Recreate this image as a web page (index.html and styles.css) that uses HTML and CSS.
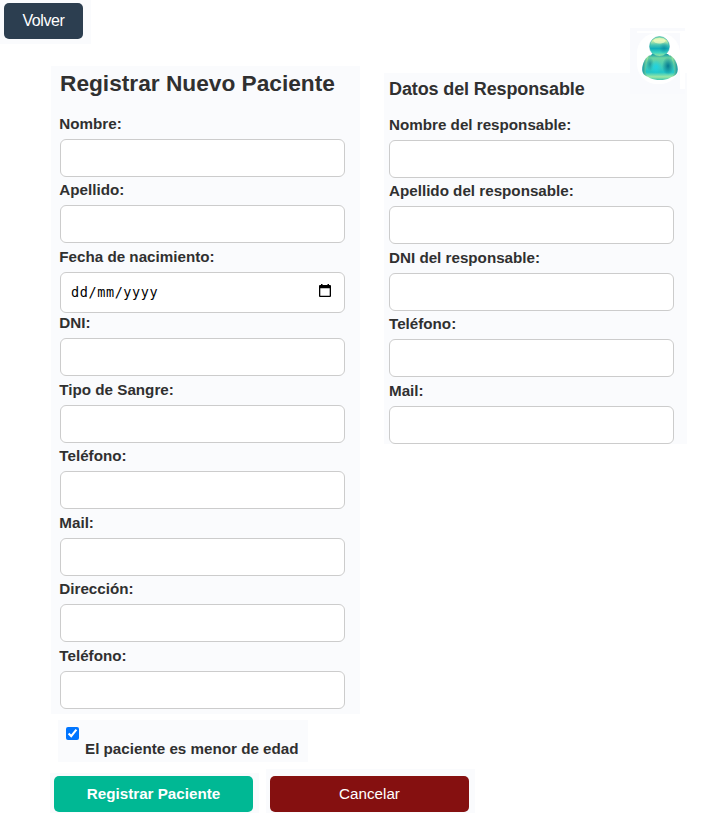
FILE: index.html
```html
<!DOCTYPE html>
<html lang="es">
<head>
<meta charset="utf-8">
<title>Registrar Nuevo Paciente</title>
<link rel="stylesheet" href="styles.css">
</head>
<body>
<header class="topbar"><button class="btn back" type="button">Volver</button></header>
<form class="page">
  <div class="columns">
    <section class="panel patient">
      <h1>Registrar Nuevo Paciente</h1>
      <label class="field"><span>Nombre:</span><input type="text"></label>
      <label class="field"><span>Apellido:</span><input type="text"></label>
      <div class="field"><span>Fecha de nacimiento:</span>
        <div class="date"><span class="date-text">dd/mm/yyyy</span>
          <svg class="calendar" viewBox="0 0 12 13"><path fill="#000" fill-rule="evenodd" d="M2 0h1.500v1h5V0H10v1h1a1 1 0 0 1 1 1v10a1 1 0 0 1-1 1H1a1 1 0 0 1-1-1V2a1 1 0 0 1 1-1h1zM1.300 4.200v7.500h9.400V4.200z"/></svg>
        </div>
      </div>
      <label class="field"><span>DNI:</span><input type="text"></label>
      <label class="field"><span>Tipo de Sangre:</span><input type="text"></label>
      <label class="field"><span>Teléfono:</span><input type="text"></label>
      <label class="field"><span>Mail:</span><input type="text"></label>
      <label class="field"><span>Dirección:</span><input type="text"></label>
      <label class="field"><span>Teléfono:</span><input type="text"></label>
    </section>
    <section class="panel guardian">
      <h2>Datos del Responsable</h2>
      <label class="field"><span>Nombre del responsable:</span><input type="text"></label>
      <label class="field"><span>Apellido del responsable:</span><input type="text"></label>
      <label class="field"><span>DNI del responsable:</span><input type="text"></label>
      <label class="field"><span>Teléfono:</span><input type="text"></label>
      <label class="field"><span>Mail:</span><input type="text"></label>
      <div class="avatar">
        <svg viewBox="0 0 55 66">
          <defs>
            <linearGradient id="head" x2="0" y2="1"><stop offset="0" stop-color="#7fdcae"/><stop offset=".2" stop-color="#d8f3a5"/><stop offset=".42" stop-color="#4cc6b4"/><stop offset=".6" stop-color="#10adba"/><stop offset=".8" stop-color="#3bd2bf"/><stop offset="1" stop-color="#a8e89c"/></linearGradient>
            <linearGradient id="body" x2="0" y2="1"><stop offset="0" stop-color="#1199a6"/><stop offset=".15" stop-color="#6ed5a2"/><stop offset=".38" stop-color="#50cfb0"/><stop offset=".7" stop-color="#1fc5c8"/><stop offset=".88" stop-color="#9de8a4"/><stop offset="1" stop-color="#3cc6ae"/></linearGradient>
            <linearGradient id="arm"><stop offset="0" stop-color="#0f95a1"/><stop offset=".15" stop-color="#8fdf9c"/><stop offset=".3" stop-color="#0e8b9b"/><stop offset=".7" stop-color="#087f94"/><stop offset=".85" stop-color="#8fdf9c"/><stop offset="1" stop-color="#0f95a1"/></linearGradient>
            <radialGradient id="shade"><stop offset="0" stop-color="#06798f"/><stop offset="1" stop-color="#06798f" stop-opacity="0"/></radialGradient>
            <radialGradient id="glow"><stop offset="0" stop-color="#20d3e2"/><stop offset="1" stop-color="#20d3e2" stop-opacity="0"/></radialGradient>
          </defs>
          <path fill="#fff" d="M7 3h48v2H7zM50 5h5v56h-5z"/>
          <rect x="7" y="5" width="43" height="51" rx="20" fill="#fff"/>
          <path d="M19 27.500C14 31 12.200 37 12.200 41.500c0 4.500 3 7 7 7.500h21.500c4-.5 7-3 7-7.500 0-4.500-2-10.500-7-14z" fill="url(#arm)"/>
          <path d="M22 26h16c5 5 6.500 11 6.500 18-1 5.500-7 8-14.500 8S16.500 50 15.500 44c0-7 1.500-13 6.500-18z" fill="url(#body)"/>
          <ellipse cx="38" cy="38" rx="6" ry="9" fill="url(#shade)"/>
          <ellipse cx="20" cy="36" rx="4" ry="7" fill="url(#shade)" opacity=".6"/>
          <ellipse cx="26" cy="39" rx="6" ry="7" fill="url(#glow)"/>
          <circle cx="29.500" cy="18.500" r="9.900" fill="url(#head)" stroke="#26aaa9" stroke-width=".6"/>
          <ellipse cx="34" cy="20" rx="5" ry="6" fill="url(#shade)" opacity=".5"/>
          <ellipse cx="29.500" cy="12.800" rx="6" ry="2.800" fill="#f3fbc8" opacity=".7"/>
        </svg>
      </div>
    </section>
  </div>
  <label class="minor"><input type="checkbox" checked><span>El paciente es menor de edad</span></label>
  <div class="actions">
    <div class="action save-wrap"><button class="btn save" type="button">Registrar Paciente</button></div>
    <div class="action cancel-wrap"><button class="btn cancel" type="button">Cancelar</button></div>
  </div>
</form>
</body>
</html>
```
FILE: styles.css
```css
* { box-sizing: border-box; }
body { margin: 0; height: 813px; overflow: hidden; background: #fff; color: #303030; font: 15.2px/18px "Liberation Sans", Arial, sans-serif; }
.topbar { width: 91px; height: 44px; padding: 3px 4px; background: #fafbfd; }
.btn { display: block; border: 0; border-radius: 5px; padding: 0; color: #fff; font: inherit; height: 36px; }
.back { width: 79px; background: #2c3e50; font-size: 16px; letter-spacing: -.4px; }
.page { padding: 22px 0 0 51px; }
.columns { display: flex; align-items: flex-start; gap: 24px; }
.panel { position: relative; background: #fafbfd; }
.patient { width: 309px; height: 648px; padding: 2px 15px 0 9px; }
.guardian { width: 303px; height: 371px; margin-top: 7px; padding: 2px 13px 0 5px; }
h1, h2 { margin: 0; white-space: nowrap; }
h1 { height: 46.900px; font-size: 22.7px; line-height: 30px; }
h2 { height: 40.900px; font-size: 18px; line-height: 28px; letter-spacing: -.12px; }
.field { display: block; height: 66.5px; font-weight: bold; white-space: nowrap; }
.field > span { display: block; height: 24px; }
.patient .field > span { margin-left: -.7px; }
.field input, .date { display: block; width: 285px; height: 38px; border: 1px solid #ccc; border-radius: 6px; background: #fff; }
.date { display: flex; align-items: center; justify-content: space-between; height: 41px; padding: 0 13px 0 10px; color: #000; }
.date-text { font: 13.5px/18px "DejaVu Sans Mono", monospace; letter-spacing: .6px; }
.calendar { width: 12px; height: 13px; margin-top: -3px; }
.avatar { position: absolute; left: 246px; top: -45px; width: 55px; height: 66px; background: #f9fafd; }
.avatar svg { display: block; width: 55px; height: 66px; }
.minor { display: flex; width: 250px; height: 42px; margin: 6px 0 0 7px; padding: 7px 0 0 8px; background: #fafbfd; font-weight: bold; white-space: nowrap; }
.minor input { width: 13px; height: 13px; margin: 0 6px 0 0; }
.minor span { padding-top: 13px; }
.actions { display: flex; align-items: flex-end; margin: 7px 0 0 -1px; gap: 7px; }
.action { background: #fafbfd; }
.save-wrap { padding: 3px 6px 1px 4px; }
.cancel-wrap { padding: 7px 6px 1px 4px; }
.save { width: 199px; background: #00b894; font-weight: bold; }
.cancel { width: 199px; background: #851010; }
```
